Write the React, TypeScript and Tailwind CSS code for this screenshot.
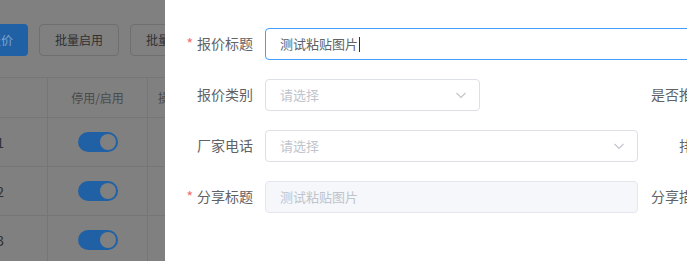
import React from 'react';

const font = { fontFamily: '"Noto Sans CJK SC", "Noto Sans", sans-serif' };

const rows = ['1', '2', '3'];

const Toggle = () => (
  <div className="w-10 h-5 rounded-full bg-[#2061a6] flex items-center justify-end pr-[2px]">
    <div className="w-4 h-4 rounded-full bg-[#808080]" />
  </div>
);

const Arrow = () => (
  <svg width="14" height="14" viewBox="0 0 14 14" className="shrink-0">
    <polyline points="2.5,5 7,9.5 11.5,5" fill="none" stroke="#c0c4cc" strokeWidth="1.1" />
  </svg>
);

const Label = ({ text, required }: { text: string; required?: boolean }) => (
  <div className="w-[80px] shrink-0 pr-3 text-right text-[14px] leading-5 text-[#606266] whitespace-nowrap mb-[2px]">
    {required && <span className="text-[#f56c6c] mr-1">*</span>}
    {text}
  </div>
);

const Select = ({ width }: { width: string }) => (
  <div className={`${width} h-8 shrink-0 border border-[#dcdfe6] rounded bg-white flex items-center justify-between pl-[14px] pr-[11px]`}>
    <span className="text-[13px] text-[#c0c4cc]">请选择</span>
    <Arrow />
  </div>
);

const BackgroundPage = () => (
  <div className="w-[165px] shrink-0 h-full bg-[#808080] overflow-hidden">
    <div className="flex gap-[11px] pt-6 ml-[-50px]">
      <div className="h-8 px-[15px] rounded bg-[#2061a6] flex items-center text-[12px] text-[#7fa6cf] whitespace-nowrap">新增报价</div>
      <div className="h-8 px-[15px] rounded border border-[#6f6f6f] flex items-center text-[12px] text-[#303133] whitespace-nowrap">批量启用</div>
      <div className="h-8 px-[15px] rounded border border-[#6f6f6f] flex items-center text-[12px] text-[#303133] whitespace-nowrap">批量停用</div>
    </div>
    <div className="mt-[21px] ml-[-40px] w-[260px] border-t border-[#767676]">
      <div className="flex h-10 border-b border-[#767676] text-[12px] text-[#484a4c]">
        <div className="w-[88px] border-r border-[#767676]" />
        <div className="w-[100px] border-r border-[#767676] flex items-center justify-center">停用/启用</div>
        <div className="flex-1 flex items-center pl-[10px] whitespace-nowrap">操作</div>
      </div>
      {rows.map((r) => (
        <div key={r} className="flex h-[49px] border-b border-[#767676]">
          <div className="w-[88px] border-r border-[#767676] flex items-center justify-end pr-[43px] text-[14px] text-[#303133]">{r}</div>
          <div className="w-[100px] border-r border-[#767676] flex items-center justify-center">
            <Toggle />
          </div>
          <div className="flex-1" />
        </div>
      ))}
    </div>
  </div>
);

const Drawer = () => (
  <div className="flex-1 h-full bg-white overflow-hidden">
    <div className="w-[700px] pl-5 pt-7 flex flex-col gap-[19px]">
      <div className="flex items-center h-8">
        <Label text="报价标题" required />
        <div className="w-[500px] h-8 shrink-0 border border-[#409eff] rounded flex items-center pl-[14px]">
          <span className="text-[13px] text-[#606266]">测试粘贴图片</span>
          <span className="w-px h-[15px] bg-[#303133] ml-[1px]" />
        </div>
      </div>
      <div className="flex items-center h-8">
        <div className="w-[454px] shrink-0 flex items-center">
          <Label text="报价类别" />
          <Select width="w-[215px]" />
        </div>
        <Label text="是否推荐" />
      </div>
      <div className="flex items-center h-8">
        <div className="w-[454px] shrink-0 flex items-center">
          <Label text="厂家电话" />
          <Select width="w-[373px]" />
        </div>
        <Label text="排序" />
      </div>
      <div className="flex items-center h-8">
        <div className="w-[454px] shrink-0 flex items-center">
          <Label text="分享标题" required />
          <div className="w-[373px] h-8 shrink-0 border border-[#e4e7ed] rounded bg-[#f5f7fa] flex items-center pl-[14px]">
            <span className="text-[13px] text-[#c0c4cc]">测试粘贴图片</span>
          </div>
        </div>
        <Label text="分享描述" />
      </div>
    </div>
  </div>
);

export default function App() {
  return (
    <div className="w-[687px] h-[261px] flex overflow-hidden" style={font}>
      <BackgroundPage />
      <Drawer />
    </div>
  );
}
